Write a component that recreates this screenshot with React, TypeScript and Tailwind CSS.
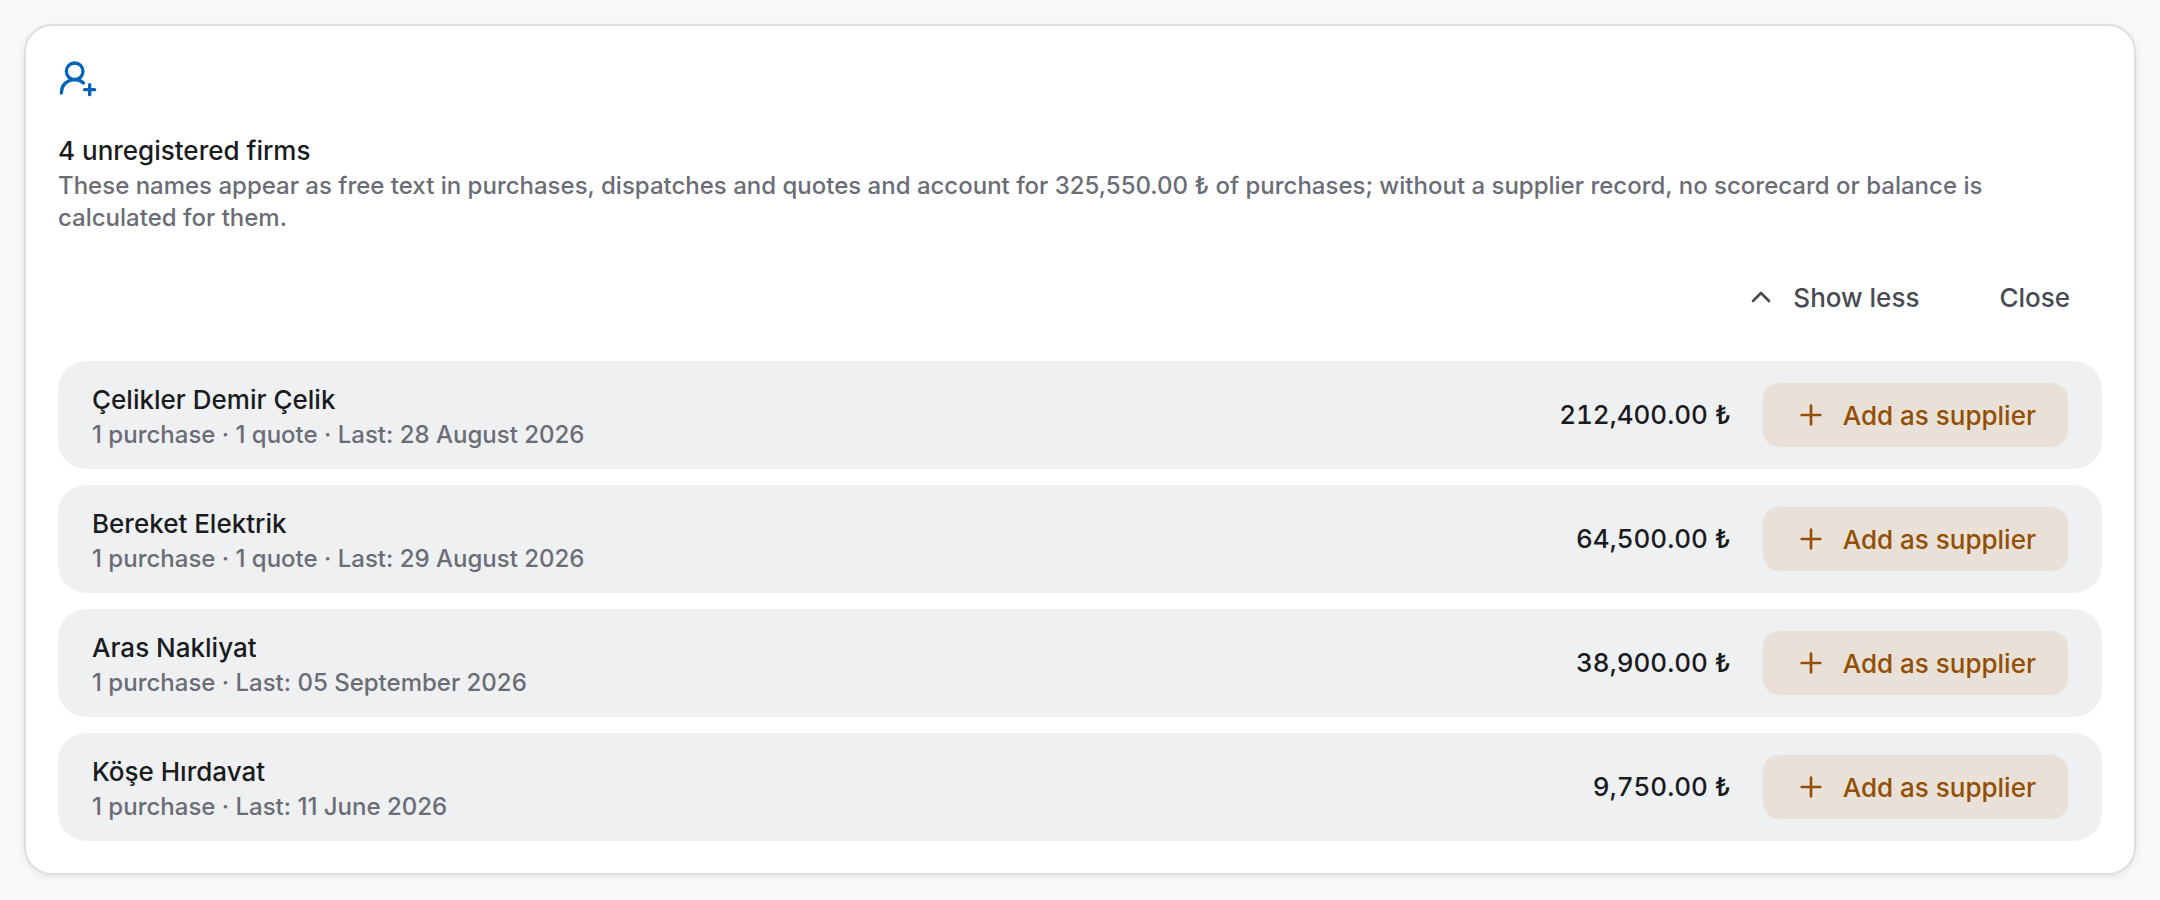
import { ChevronUp, Plus, UserRoundPlus } from "lucide-react";

type Firm = { name: string; detail: string; amount: string };

const firms: Firm[] = [
  { name: "Çelikler Demir Çelik", detail: "1 purchase · 1 quote · Last: 28 August 2026", amount: "212,400.00 ₺" },
  { name: "Bereket Elektrik", detail: "1 purchase · 1 quote · Last: 29 August 2026", amount: "64,500.00 ₺" },
  { name: "Aras Nakliyat", detail: "1 purchase · Last: 05 September 2026", amount: "38,900.00 ₺" },
  { name: "Köşe Hırdavat", detail: "1 purchase · Last: 11 June 2026", amount: "9,750.00 ₺" },
];

function FirmRow({ firm }: { firm: Firm }) {
  return (
    <li className="flex items-center gap-8 rounded-[28px] bg-[#eff0f2] px-[34px] py-[18px]">
      <div className="min-w-0 flex-1 pt-0.5">
        <p className="text-[26px] leading-[38px] font-medium text-[#1a1b20]">{firm.name}</p>
        <p className="text-2xl leading-8 font-medium text-[#6a6d76]">{firm.detail}</p>
      </div>
      <span className="text-[26px] leading-[38px] font-medium whitespace-nowrap text-[#1a1b20] tabular-nums">
        {firm.amount}
      </span>
      <button
        type="button"
        className="flex h-16 items-center gap-4 rounded-2xl bg-[#e9e1d7] px-8 text-[26px] font-medium whitespace-nowrap text-[#924f05]"
      >
        <Plus className="size-8" aria-hidden="true" />
        Add as supplier
      </button>
    </li>
  );
}

export default function App() {
  return (
    <main className="min-h-screen bg-[#f7f8fa] p-6 font-['Inter',sans-serif] antialiased">
      <section className="rounded-[28px] border-2 border-[#dddee2] bg-white p-8 shadow-[0_2px_6px_rgba(0,0,0,0.08)]">
        <UserRoundPlus className="size-10 text-[#0062b8]" aria-hidden="true" />
        <div className="pt-[34px] pb-[31px]">
          <h2 className="text-[26px] leading-[38px] font-medium text-[#1a1b20]">4 unregistered firms</h2>
          <p className="text-2xl leading-8 font-medium text-[#6a6d76]">
            These names appear as free text in purchases, dispatches and quotes and account for 325,550.00 ₺ of
            purchases; without a supplier record, no scorecard or balance is calculated for them.
          </p>
        </div>
        <div className="flex justify-end gap-4">
          <button
            type="button"
            className="flex h-16 items-center gap-4 rounded-2xl px-8 text-[26px] font-medium text-[#484b52]"
          >
            <ChevronUp className="size-8" aria-hidden="true" />
            Show less
          </button>
          <button type="button" className="h-16 rounded-2xl px-8 text-[26px] font-medium text-[#484b52]">
            Close
          </button>
        </div>
        <ul className="mt-8 flex flex-col gap-4">
          {firms.map((firm) => (
            <FirmRow key={firm.name} firm={firm} />
          ))}
        </ul>
      </section>
    </main>
  );
}
